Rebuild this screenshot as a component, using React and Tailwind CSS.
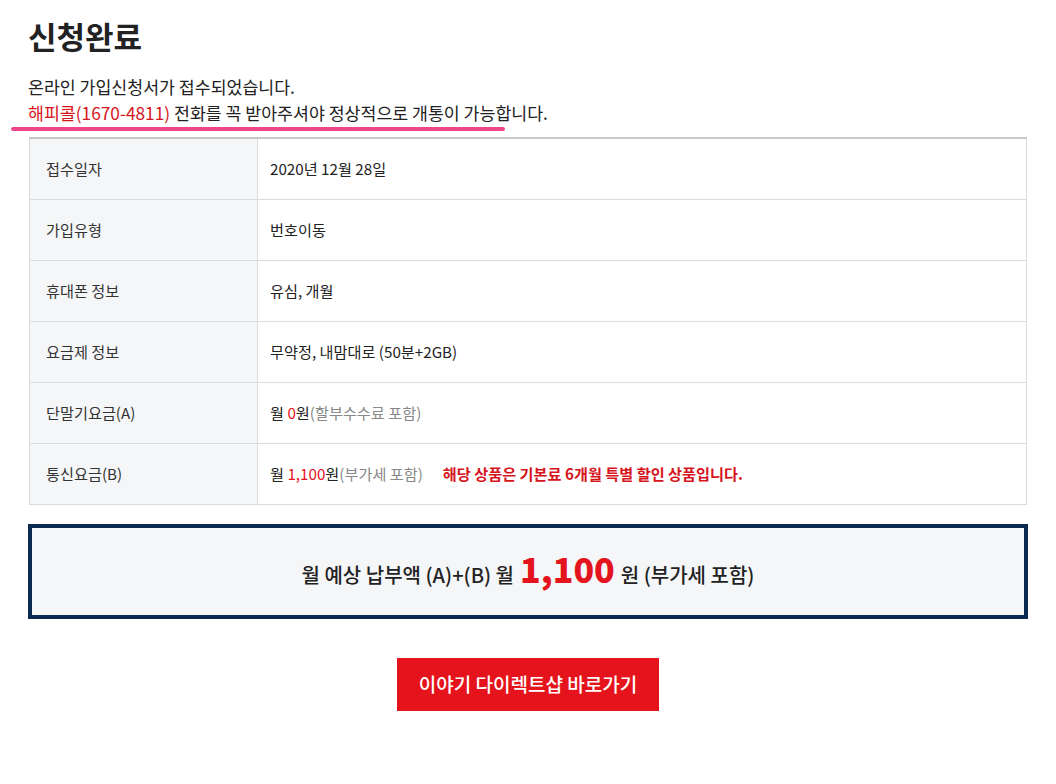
export default function App() {
  const font = { fontFamily: '"Noto Sans CJK KR", "Noto Sans", sans-serif' };
  const rows = [
    ["접수일자", <span>2020년 12월 28일</span>],
    ["가입유형", <span>번호이동</span>],
    ["휴대폰 정보", <span>유심, 개월</span>],
    ["요금제 정보", <span>무약정, 내맘대로 (50분+2GB)</span>],
    [
      "단말기요금(A)",
      <span>
        월 <span className="text-[#e3141d]">0</span>원<span className="text-[#888]">(할부수수료 포함)</span>
      </span>,
    ],
    [
      "통신요금(B)",
      <span>
        월 <span className="text-[#e3141d]">1,100</span>원<span className="text-[#888]">(부가세 포함)</span>
        <span className="ml-[20px] text-[#d6141c] font-bold">해당 상품은 기본료 6개월 특별 할인 상품입니다.</span>
      </span>,
    ],
  ];
  return (
    <div className="w-[1056px] min-h-[784px] bg-white text-[#222]" style={font}>
      <div className="pt-[16px]">
        <h1 className="ml-[28px] text-[31px] font-bold leading-[40px] text-[#222]">신청완료</h1>
        <div className="mt-[18px] ml-[28px] text-[17.3px] leading-[26px] text-[#222]">
          <p>온라인 가입신청서가 접수되었습니다.</p>
          <p>
            <span className="text-[#d6141c]">해피콜(1670-4811)</span> 전화를 꼭 받아주셔야 정상적으로 개통이 가능합니다.
          </p>
        </div>
        <div className="ml-[11px] mt-[1px] w-[494px] h-[4px] rounded-full bg-[#f0458a]"></div>
        <div className="mx-[29px] mt-[6px] w-[998px]">
          <table className="w-full border-collapse border-t-2 border-t-[#c8c8c8] border-r border-r-[#dcdcdc] text-[15.2px]">
            <tbody>
              {rows.map(([label, value], i) => (
                <tr key={i} className="h-[61px] border-b border-b-[#dcdcdc]">
                  <td className="w-[228px] bg-[#f5f6f8] pl-[16px] text-[#333] border-r border-r-[#dcdcdc] border-l border-l-[#dcdcdc]">
                    {label}
                  </td>
                  <td className="pl-[12px] text-[#222]">{value}</td>
                </tr>
              ))}
            </tbody>
          </table>
        </div>
        <div className="mx-[28px] mt-[19px] h-[95px] w-[1000px] border-4 border-[#0a2a52] bg-[#f5f6f8] flex items-center justify-center">
          <p className="text-[20px] font-medium text-[#222] flex items-baseline gap-[6px]">
            <span>월 예상 납부액 (A)+(B) 월</span>
            <span className="text-[34px] font-extrabold text-[#e3141d] leading-none">1,100</span>
            <span>원 (부가세 포함)</span>
          </p>
        </div>
        <div className="flex justify-center mt-[39px]">
          <button className="w-[262px] h-[53px] bg-[#e5141c] text-white text-[19px] font-medium">
            이야기 다이렉트샵 바로가기
          </button>
        </div>
      </div>
    </div>
  );
}
